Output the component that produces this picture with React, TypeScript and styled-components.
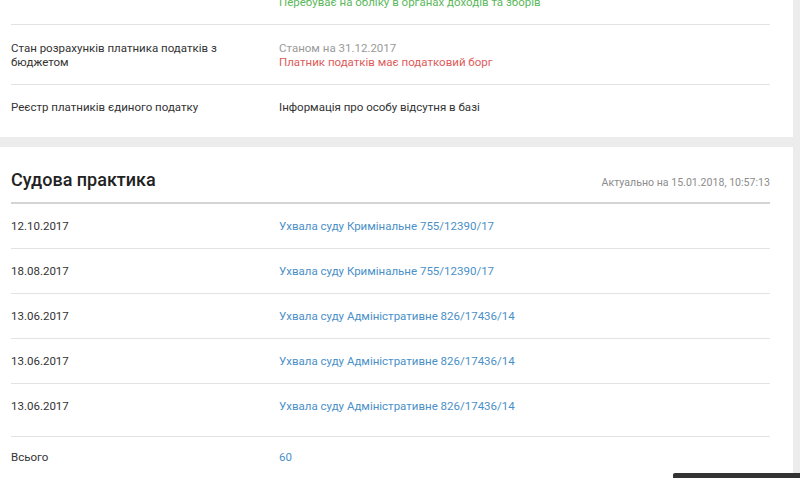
import React from 'react';
import styled, { createGlobalStyle } from 'styled-components';

const GlobalStyle = createGlobalStyle`
  html, body {
    margin: 0;
    padding: 0;
    background: #ececec;
    overflow: hidden;
  }
  body {
    font-family: Roboto, 'Noto Sans', Arial, sans-serif;
    font-size: 11.5px;
    color: #333;
  }
`;

const Page = styled.div`
  width: 793px;
  display: flex;
  flex-direction: column;
  gap: 10px;
`;

const Card = styled.section<{ $offset?: number }>`
  background: #fff;
  padding: 0 23px 0 11px;
  margin-top: ${p => (p.$offset ? `${p.$offset}px` : '0')};
`;

const Row = styled.div<{ $last?: boolean; $pt?: number; $pb?: number }>`
  display: flex;
  align-items: flex-start;
  line-height: 14px;
  padding: ${p => p.$pt ?? 15}px 0 ${p => p.$pb ?? 15}px;
  border-bottom: ${p => (p.$last ? 'none' : '1px solid #e3e3e3')};
`;

const Label = styled.div`
  width: 268px;
  flex-shrink: 0;
  padding-right: 44px;
  box-sizing: border-box;
`;

const Value = styled.div`
  flex: 1;
  display: flex;
  flex-direction: column;
`;

const Muted = styled.span`
  color: #9a9a9a;
`;

const Good = styled.span`
  color: #5cb85c;
`;

const Bad = styled.span`
  color: #e05b5b;
`;

const Link = styled.a`
  color: #4a90c8;
  text-decoration: none;
  cursor: pointer;
`;

const Header = styled.header`
  display: flex;
  justify-content: space-between;
  align-items: flex-end;
  padding: 22px 0 11px;
  border-bottom: 2px solid #d4d4d4;
`;

const Title = styled.h2`
  margin: 0;
  font-size: 18px;
  line-height: 22px;
  font-weight: 500;
  color: #222;
`;

const Stamp = styled.span`
  font-size: 10.6px;
  line-height: 14px;
  color: #8c8c8c;
  padding-bottom: 1px;
`;

const DarkBar = styled.div`
  position: fixed;
  right: 0;
  bottom: -20px;
  width: 127px;
  height: 25px;
  background: #333;
  border-top-left-radius: 2px;
`;

const cases = [
  { date: '12.10.2017', title: 'Ухвала суду Кримінальне 755/12390/17' },
  { date: '18.08.2017', title: 'Ухвала суду Кримінальне 755/12390/17' },
  { date: '13.06.2017', title: 'Ухвала суду Адміністративне 826/17436/14' },
  { date: '13.06.2017', title: 'Ухвала суду Адміністративне 826/17436/14' },
  { date: '13.06.2017', title: 'Ухвала суду Адміністративне 826/17436/14' },
];

export default function App() {
  return (
    <>
      <GlobalStyle />
      <Page>
        <Card $offset={-20}>
          <Row>
            <Label />
            <Value>
              <Good>Перебуває на обліку в органах доходів та зборів</Good>
            </Value>
          </Row>
          <Row $pt={16} $pb={15}>
            <Label>Стан розрахунків платника податків з бюджетом</Label>
            <Value>
              <Muted>Станом на 31.12.2017</Muted>
              <Bad>Платник податків має податковий борг</Bad>
            </Value>
          </Row>
          <Row $last $pb={23}>
            <Label>Реєстр платників єдиного податку</Label>
            <Value>Інформація про особу відсутня в базі</Value>
          </Row>
        </Card>
        <Card>
          <Header>
            <Title>Судова практика</Title>
            <Stamp>Актуально на 15.01.2018, 10:57:13</Stamp>
          </Header>
          {cases.map((c, i) => (
            <Row key={i} $pb={i === cases.length - 1 ? 23 : 15}>
              <Label>{c.date}</Label>
              <Value>
                <Link>{c.title}</Link>
              </Value>
            </Row>
          ))}
          <Row $last $pt={13}>
            <Label>Всього</Label>
            <Value>
              <Link>60</Link>
            </Value>
          </Row>
        </Card>
      </Page>
      <DarkBar />
    </>
  );
}
